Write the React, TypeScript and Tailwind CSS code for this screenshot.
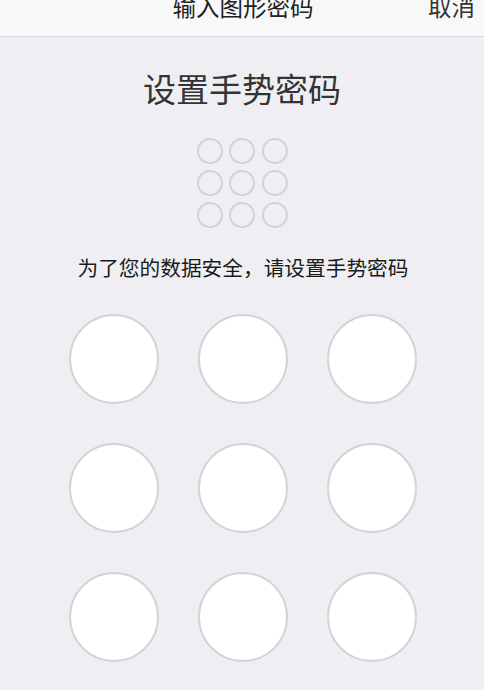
const font = { fontFamily: '"Noto Sans CJK SC", "Noto Sans", sans-serif' }

function Dot() {
  return <div className="h-[26px] w-[26px] rounded-full border-2 border-[#d2d2d4]" />
}

function Node() {
  return <div className="h-[90px] w-[90px] rounded-full border-2 border-[#d4d4d6] bg-white" />
}

export default function App() {
  const nine = Array.from({ length: 9 })
  return (
    <div className="flex min-h-[690px] w-full flex-col items-center overflow-hidden bg-[#efeff3]" style={font}>
      <div className="relative h-[37px] w-full shrink-0 overflow-hidden border-b border-[#d9d9dc] bg-[#f8f8f8]">
        <div className="-mt-[5px] flex items-start justify-center pl-[2px] text-[23.5px] leading-none text-[#222]">
          输入图形密码
        </div>
        <div className="absolute right-[9px] -top-[5px] text-[23.5px] leading-none text-[#333]">取消</div>
      </div>

      <div className="mt-[35px] text-[33px] leading-none text-[#333]">设置手势密码</div>

      <div className="mt-[33px] grid grid-cols-3 gap-x-[6.5px] gap-y-[6px]">
        {nine.map((_, i) => (
          <Dot key={i} />
        ))}
      </div>

      <div className="mt-[29px] pl-[2px] text-[20.7px] leading-none text-[#1a1a1a]">为了您的数据安全，请设置手势密码</div>

      <div className="mt-[36px] grid grid-cols-3 gap-[39px] pl-[1px]">
        {nine.map((_, i) => (
          <Node key={i} />
        ))}
      </div>
    </div>
  )
}
